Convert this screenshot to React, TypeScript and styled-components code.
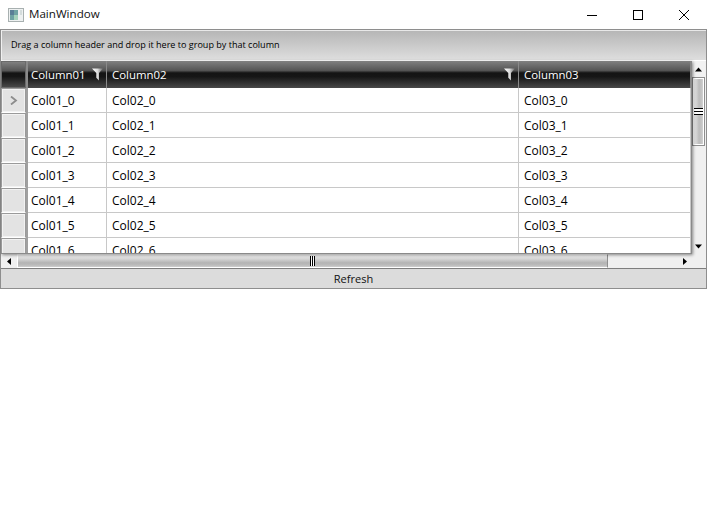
import React from "react";
import styled, { createGlobalStyle } from "styled-components";

const Global = createGlobalStyle`
  html, body { margin: 0; padding: 0; background: #fff; }
  body { font-family: "Open Sans", "Noto Sans", "Liberation Sans", sans-serif; font-size: 12px; color: #000; }
`;

const headGradient = "linear-gradient(#808080 0, #555 35%, #141414 44%, #161616 58%, #484848 100%)";

const Page = styled.div`width: 707px; height: 528px; background: #fff; overflow: hidden;`;
const TitleBar = styled.div`height: 29px; display: flex; align-items: center;`;
const AppIcon = styled.svg`width: 16px; height: 16px; margin-left: 8px; flex: none;`;
const TitleText = styled.span`margin-left: 5px; font-size: 11.6px; color: #111; flex: 1; padding-bottom: 2px;`;
const WinButton = styled.div`width: 46px; height: 29px; display: flex; align-items: center; justify-content: center; flex: none;`;
const WinIcon = styled.svg`width: 12px; height: 12px; display: block;`;

const Grid = styled.div`
  height: 240px; box-sizing: border-box; border: 1px solid #8e8e8e; border-bottom: 0;
  display: flex; flex-direction: column;
`;
const GroupPanel = styled.div`
  height: 30px; flex: none; box-sizing: border-box; padding: 0 0 2px 9px; display: flex; align-items: center; font-size: 9.05px;
  background: linear-gradient(#b6b6b6, #dedede); border-left: 1px solid #f0f0f0; border-top: 1px solid #e8e8e8; color: #000;
`;
const GridBody = styled.div`flex: 1; min-height: 0; display: flex; flex-direction: column; background: #f0f0f0; border-top: 1px solid #fff;`;
const Upper = styled.div`height: 193px; display: flex; flex: none;`;
const Table = styled.div`width: 690px; height: 192px; overflow: hidden; background: #fff; flex: none; box-shadow: 1px 1px 3px rgba(0,0,0,.45); position: relative; border-right: 1px solid #8a8a8a; border-bottom: 1px solid #8a8a8a;`;
const HeadRow = styled.div`display: flex; height: 27px;`;
const HeadCell = styled.div<{ $w: number; $pad: number }>`
  width: ${p => p.$w}px; flex: none; box-sizing: border-box; height: 27px; padding: 0 0 0 ${p => p.$pad}px; display: flex; align-items: center; justify-content: space-between;
  color: #fff; font-size: 11.4px; border-right: 1px solid #8a8a8a;
  background: ${headGradient};
`;
const HeadCorner = styled.div`
  width: 25px; height: 27px; flex: none; box-sizing: border-box; border: 1px solid #6a6a6a; background: ${headGradient};
`;
const HeadSplit = styled.div`width: 2px; box-sizing: border-box; flex: none; background: #8a8a8a;`;
const Funnel = styled.svg`width: 11px; height: 13px; margin-right: 3px; margin-top: -1px; flex: none;`;
const Row = styled.div`display: flex; height: 25px;`;
const RowHeader = styled.div`
  width: 25px; height: 25px; box-sizing: border-box; flex: none; background: #e3e3e3; border: 1px solid #9a9a9a; border-bottom: 1px solid #fff;
  display: flex; align-items: center; justify-content: center; box-shadow: inset 0 0 0 1px #f2f2f2;
`;
const RowSplit = styled.div`width: 2px; flex: none; background: #a0a0a0;`;
const Cell = styled.div<{ $w: number; $pad: number }>`
  width: ${p => p.$w}px; flex: none; box-sizing: border-box; height: 25px; padding: 0 0 0 ${p => p.$pad}px; display: flex; align-items: center; font-size: 12px; color: #000;
  border-right: 1px solid #c8c8c8; border-bottom: 1px solid #c8c8c8;
`;
const Chevron = styled.svg`width: 9px; height: 9px; display: block;`;

const VScroll = styled.div`width: 14px; flex: none; display: flex; flex-direction: column; align-items: flex-start; background: #f0f0f0;`;
const VUp = styled.div`height: 16px; width: 13px; flex: none; display: flex; align-items: center; justify-content: center; background: #f2f2f2;`;
const Tri = styled.svg`width: 7px; height: 7px; display: block;`;
const VThumb = styled.div`
  width: 13px; height: 69px; box-sizing: border-box; flex: none; border: 1px solid #8e8e8e; box-shadow: inset 0 0 0 1px #fff;
  background: linear-gradient(90deg, #f0f0f0 0, #bcbcbc 55%, #c6c6c6 80%, #dedede 100%);
  display: flex; align-items: center; justify-content: center;
`;
const Grip = styled.div`width: 9px; height: 7px; background: repeating-linear-gradient(#000 0, #000 1px, #fff 1px, #fff 3px);`;
const VSpacer = styled.div`flex: 1;`;
const VDown = styled.div`height: 16px; width: 13px; box-sizing: border-box; flex: none; display: flex; align-items: flex-start; justify-content: center; padding-top: 5px;`;

const HScroll = styled.div`height: 15px; display: flex; align-items: flex-start; background: #f0f0f0; flex: none; border-bottom: 1px solid #7e7e7e; box-sizing: border-box;`;
const HLeft = styled.div`width: 16px; height: 14px; display: flex; align-items: center; justify-content: center; flex: none;`;
const HThumb = styled.div`
  width: 591px; height: 14px; box-sizing: border-box; flex: none; border: 1px solid #8e8e8e; border-left: 1px solid #fff; border-top-color: #fff; border-bottom-color: #fff;
  background: linear-gradient(#f2f2f2 0, #d8d8d8 30%, #b4b4b4 65%, #bcbcbc 85%, #cfcfcf 100%);
  display: flex; align-items: center; justify-content: center;
`;
const HGrip = styled.div`width: 5px; height: 10px; background: repeating-linear-gradient(90deg, #000 0, #000 1px, #fff 1px, #fff 2px);`;
const HSpacer = styled.div`flex: 1;`;
const HRight = styled.div`width: 16px; margin-right: 14px; height: 14px; display: flex; align-items: center; justify-content: center; flex: none;`;

const Refresh = styled.div`
  height: 20px; box-sizing: border-box; border: 1px solid #8e8e8e; border-top: 0; background: #dcdcdc; display: flex; align-items: center; justify-content: center;
  font-size: 11px; color: #111;
`;

const FunnelIcon = () => (
  <Funnel viewBox="0 0 11 13">
    <defs>
      <linearGradient id="fg" x1="0" x2="1" y1="0" y2="0">
        <stop offset="0" stopColor="#fff" />
        <stop offset=".5" stopColor="#ddd" />
        <stop offset="1" stopColor="#666" />
      </linearGradient>
    </defs>
    <path d="M0 0.5 H11 L7 5 V12.5 L4.3 9.8 V5 Z" fill="url(#fg)" />
  </Funnel>
);

const cols = [79, 412, 172];
const pads = [3, 5, 5];

export default function App() {
  const rows = [0, 1, 2, 3, 4, 5, 6];
  return (
    <Page>
      <Global />
      <TitleBar>
        <AppIcon viewBox="0 0 16 16">
          <rect x="0.5" y="1.5" width="15" height="13" fill="#eef1f1" stroke="#a8b0b0" />
          <rect x="2" y="3" width="8" height="10" fill="#6fa3a3" />
          <rect x="2" y="3" width="4" height="5" fill="#5a7f96" />
          <rect x="6" y="8" width="4" height="5" fill="#a5d3bb" />
          <rect x="12" y="3" width="2" height="5" fill="#d4dcdc" />
        </AppIcon>
        <TitleText>MainWindow</TitleText>
        <WinButton>
          <WinIcon viewBox="0 0 12 12"><path d="M1 6.5H11" stroke="#000" strokeWidth="1" /></WinIcon>
        </WinButton>
        <WinButton>
          <WinIcon viewBox="0 0 12 12"><rect x="1.5" y="1.5" width="9" height="9" fill="none" stroke="#000" /></WinIcon>
        </WinButton>
        <WinButton>
          <WinIcon viewBox="0 0 12 12"><path d="M1 1L11 11M11 1L1 11" stroke="#000" strokeWidth="1" /></WinIcon>
        </WinButton>
      </TitleBar>
      <Grid>
        <GroupPanel>Drag a column header and drop it here to group by that column</GroupPanel>
        <GridBody>
          <Upper>
            <Table>
              <HeadRow>
                <HeadCorner />
                <HeadSplit />
                <HeadCell $w={cols[0]} $pad={pads[0]}>Column01<FunnelIcon /></HeadCell>
                <HeadCell $w={cols[1]} $pad={pads[1]}>Column02<FunnelIcon /></HeadCell>
                <HeadCell $w={cols[2]} $pad={pads[2]}>Column03</HeadCell>
              </HeadRow>
              {rows.map(r => (
                <Row key={r}>
                  <RowHeader>
                    {r === 0 && (
                      <Chevron viewBox="0 0 9 9"><path d="M2 0.5L7 4.5L2 8.5" fill="none" stroke="#8c8c8c" strokeWidth="1.8" /></Chevron>
                    )}
                  </RowHeader>
                  <RowSplit />
                  <Cell $w={cols[0]} $pad={pads[0]}>Col01_{r}</Cell>
                  <Cell $w={cols[1]} $pad={pads[1]}>Col02_{r}</Cell>
                  <Cell $w={cols[2]} $pad={pads[2]}>Col03_{r}</Cell>
                </Row>
              ))}
            </Table>
            <VScroll>
              <VUp><Tri viewBox="0 0 7 7"><path d="M3.5 1.5L7 5.5H0Z" fill="#000" /></Tri></VUp>
              <VThumb><Grip /></VThumb>
              <VSpacer />
              <VDown><Tri viewBox="0 0 7 7"><path d="M0 1.5H7L3.5 5.5Z" fill="#000" /></Tri></VDown>
            </VScroll>
          </Upper>
          <HScroll>
            <HLeft><Tri viewBox="0 0 7 7"><path d="M5 0L1 3.5L5 7Z" fill="#000" /></Tri></HLeft>
            <HThumb><HGrip /></HThumb>
            <HSpacer />
            <HRight><Tri viewBox="0 0 7 7"><path d="M2 0L6 3.5L2 7Z" fill="#000" /></Tri></HRight>
          </HScroll>
        </GridBody>
      </Grid>
      <Refresh>Refresh</Refresh>
    </Page>
  );
}
